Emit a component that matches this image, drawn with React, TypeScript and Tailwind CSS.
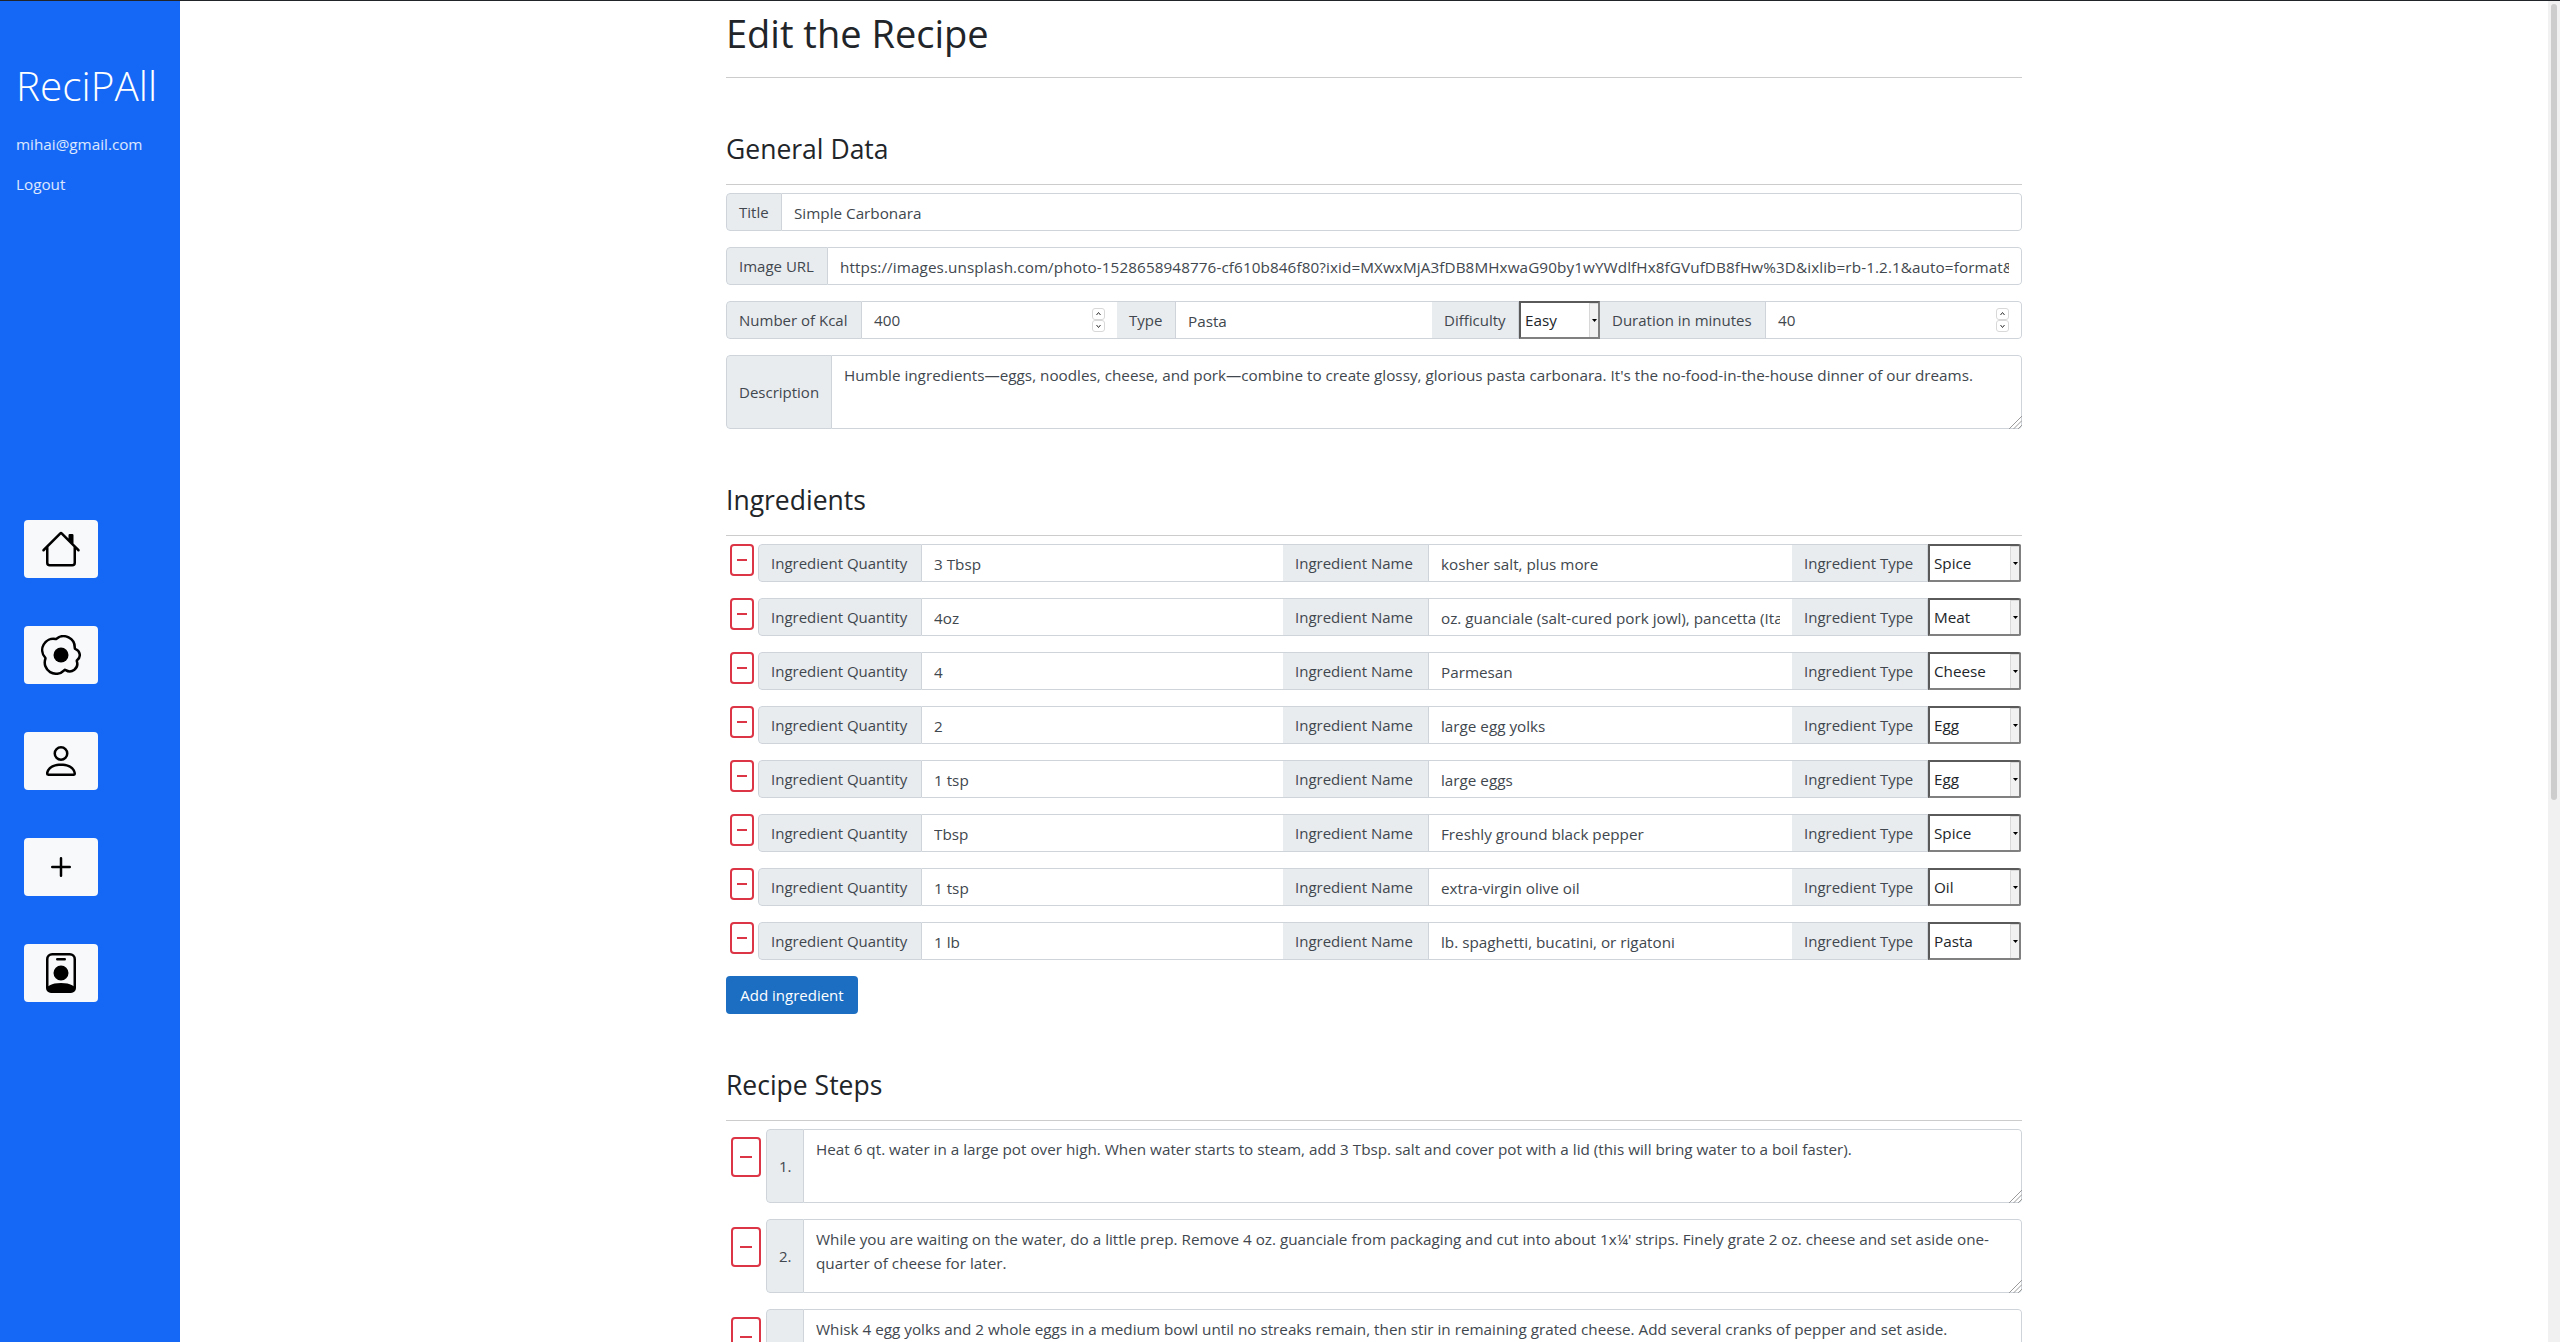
import { BsHouse, BsEggFried, BsPerson, BsPlus, BsPersonBadge } from 'react-icons/bs';

const ingredients = [
  { qty: '3 Tbsp', name: 'kosher salt, plus more', type: 'Spice' },
  { qty: '4oz', name: 'oz. guanciale (salt-cured pork jowl), pancetta (Italian bacon), or slab bacon', type: 'Meat' },
  { qty: '4', name: 'Parmesan', type: 'Cheese' },
  { qty: '2', name: 'large egg yolks', type: 'Egg' },
  { qty: '1 tsp', name: 'large eggs', type: 'Egg' },
  { qty: 'Tbsp', name: 'Freshly ground black pepper', type: 'Spice' },
  { qty: '1 tsp', name: 'extra-virgin olive oil', type: 'Oil' },
  { qty: '1 lb', name: 'lb. spaghetti, bucatini, or rigatoni', type: 'Pasta' },
];

const steps = [
  'Heat 6 qt. water in a large pot over high. When water starts to steam, add 3 Tbsp. salt and cover pot with a lid (this will bring water to a boil faster).',
  "While you are waiting on the water, do a little prep. Remove 4 oz. guanciale from packaging and cut into about 1x¼' strips. Finely grate 2 oz. cheese and set aside one-quarter of cheese for later.",
  'Whisk 4 egg yolks and 2 whole eggs in a medium bowl until no streaks remain, then stir in remaining grated cheese. Add several cranks of pepper and set aside.',
];

const navIcons = [BsHouse, BsEggFried, BsPerson, BsPlus, BsPersonBadge];

function Label({ text, className }: { text: string; className: string }) {
  return (
    <span className={`flex h-full shrink-0 items-center border-y border-r border-[#ced4da] bg-[#e9ecef] pt-px pl-3 text-[#41474e] ${className}`}>
      {text}
    </span>
  );
}

function Field({ value, className = '' }: { value: string; className?: string }) {
  return (
    <input
      readOnly
      value={value}
      className={`h-full min-w-0 flex-1 border-y border-[#ced4da] bg-white px-3 pt-px text-[15.25px] text-[#41474e] outline-none ${className}`}
    />
  );
}

function NumberField({ value, className }: { value: string; className: string }) {
  return (
    <div className={`flex h-full shrink-0 items-center border-y border-[#ced4da] bg-white pr-3 pl-3 ${className}`}>
      <span className="flex-1 pt-px text-[15.25px] text-[#41474e]">{value}</span>
      <svg width="13" height="24" viewBox="0 0 13 24" fill="none">
        <rect x="0.5" y="0.5" width="12" height="11" rx="2.5" stroke="#d8d8d8" />
        <rect x="0.5" y="12.5" width="12" height="11" rx="2.5" stroke="#d8d8d8" />
        <path d="M4.5 7l2-2.5 2 2.5" stroke="#333" />
        <path d="M4.5 17l2 2.5 2-2.5" stroke="#333" />
      </svg>
    </div>
  );
}

function Select({ value, className }: { value: string; className: string }) {
  return (
    <div className={`flex h-full shrink-0 items-stretch border-2 border-t-[#5a5a5a] border-r-[#808080] border-b-[#808080] border-l-[#5a5a5a] bg-white ${className}`}>
      <span className="flex flex-1 items-center pt-px pl-1 text-[15.25px] text-[#212529]">{value}</span>
      <span className="flex w-[9px] items-center justify-center border-t border-l border-[#d8d8d8] bg-[#f1f1f1]">
        <svg width="5" height="3" viewBox="0 0 5 3">
          <path d="M0 0h5L2.5 3z" fill="#000" />
        </svg>
      </span>
    </div>
  );
}

function DeleteButton({ className, dash }: { className: string; dash: string }) {
  return (
    <button className={`flex shrink-0 items-center justify-center rounded-[4px] border-2 border-[#dc3545] bg-white ${className}`}>
      <span className={`h-[2px] bg-[#dc3545] ${dash}`} />
    </button>
  );
}

function TextBox({ value }: { value: string }) {
  return (
    <div className="relative h-full min-w-0 flex-1">
      <textarea
        readOnly
        value={value}
        className="block h-full w-full resize-none rounded-r-[4px] border border-l-0 border-[#ced4da] px-3 pt-[7px] pb-[6px] text-[15.25px] leading-6 text-[#41474e] outline-none"
      />
      {/* resize handle */}
      <svg className="absolute right-0 bottom-0" width="14" height="14" viewBox="0 0 14 14" stroke="#9a9a9a" strokeWidth="1">
        <path d="M1 14L14 1M5.5 14L14 5.5M10 14L14 10" />
      </svg>
    </div>
  );
}

function SectionTitle({ text }: { text: string }) {
  return (
    <>
      <h3 className="mt-[54px] mb-[18px] h-[34px] text-[26.5px] leading-[34px] font-normal text-[#212529]">{text}</h3>
      <hr className="mb-2 border-[#cccccc]" />
    </>
  );
}

export default function App() {
  return (
    <div className="flex h-screen overflow-hidden border-t border-[#212529] bg-white font-['Open_Sans','Noto_Sans',sans-serif] text-[15px] text-[#212529]">
      <aside className="flex w-[180px] shrink-0 flex-col bg-[#1468f5] text-white">
        <h1 className="mt-[61px] ml-4 text-[40.5px] leading-[48px] font-light">ReciPAll</h1>
        <p className="mt-[22px] ml-4 text-[15.25px] leading-6 text-white/85">mihai@gmail.com</p>
        <p className="mt-4 ml-4 text-[15.25px] leading-6 text-white/85">Logout</p>
        <nav className="mt-[324px] flex flex-col gap-[48px] pl-6">
          {navIcons.map((Icon, i) => (
            <button key={i} className="flex h-[58px] w-[74px] items-center justify-center rounded-[4px] bg-[#f8f9fa] text-black">
              <Icon size={40} />
            </button>
          ))}
        </nav>
      </aside>

      <main className="min-w-0 flex-1 overflow-hidden pr-[526px] pl-[546px]">
        <h1 className="mt-[8px] h-[48px] text-[38px] leading-[48px] font-normal text-[#212529]">Edit the Recipe</h1>
        <hr className="mt-[20px] border-[#cccccc]" />

        <SectionTitle text="General Data" />
        <div className="flex flex-col gap-4">
          <div className="flex h-[38px] items-center overflow-hidden rounded-[4px]">
            <Label text="Title" className="w-[56px] rounded-l-[4px] border-l" />
            <Field value="Simple Carbonara" className="rounded-r-[4px] border-r" />
          </div>
          <div className="flex h-[38px] items-center overflow-hidden rounded-[4px]">
            <Label text="Image URL" className="w-[102px] rounded-l-[4px] border-l" />
            <Field
              value="https://images.unsplash.com/photo-1528658948776-cf610b846f80?ixid=MXwxMjA3fDB8MHxwaG90by1wYWdlfHx8fGVufDB8fHw%3D&ixlib=rb-1.2.1&auto=format&fit=crop&w=1350&q=80"
              className="rounded-r-[4px] border-r tracking-[0.1px]"
            />
          </div>
          <div className="flex h-[38px] items-center overflow-hidden rounded-[4px]">
            <Label text="Number of Kcal" className="w-[136px] rounded-l-[4px] border-l" />
            <NumberField value="400" className="w-[255px]" />
            <Label text="Type" className="w-[59px]" />
            <Field value="Pasta" />
            <Label text="Difficulty" className="w-[87px]" />
            <Select value="Easy" className="w-[81px]" />
            <Label text="Duration in minutes" className="w-[166px]" />
            <NumberField value="40" className="w-[256px] rounded-r-[4px] border-r" />
          </div>
          <div className="flex h-[74px] overflow-hidden rounded-[4px]">
            <Label text="Description" className="w-[106px] rounded-l-[4px] border-l" />
            <TextBox value="Humble ingredients—eggs, noodles, cheese, and pork—combine to create glossy, glorious pasta carbonara. It's the no-food-in-the-house dinner of our dreams." />
          </div>
        </div>

        <SectionTitle text="Ingredients" />
        <div className="flex flex-col gap-4">
          {ingredients.map((item, i) => (
            <div key={i} className="flex h-[38px] items-start">
              <DeleteButton className="ml-1 h-8 w-6" dash="w-[10px]" />
              <div className="ml-1 flex h-[38px] min-w-0 flex-1 items-center overflow-hidden rounded-[4px]">
                <Label text="Ingredient Quantity" className="w-[164px] rounded-l-[4px] border-l" />
                <Field value={item.qty} className="w-[361px] flex-none" />
                <Label text="Ingredient Name" className="w-[146px]" />
                <Field value={item.name} className="w-[363px] flex-none" />
                <Label text="Ingredient Type" className="w-[136px]" />
                <Select value={item.type} className="w-[93px]" />
              </div>
            </div>
          ))}
        </div>
        <button className="mt-4 h-[38px] w-[132px] rounded-[4px] bg-[#1b6ec2] pt-px text-white">Add ingredient</button>

        <SectionTitle text="Recipe Steps" />
        <div className="flex flex-col gap-4">
          {steps.map((step, i) => (
            <div key={i} className="flex h-[74px] items-start">
              <DeleteButton className="mt-2 ml-[5px] h-10 w-[30px]" dash="w-3" />
              <div className="ml-[5px] flex h-[74px] min-w-0 flex-1 overflow-hidden rounded-[4px]">
                <Label text={`${i + 1}.`} className="w-[38px] rounded-l-[4px] border-l" />
                <TextBox value={step} />
              </div>
            </div>
          ))}
        </div>
      </main>

      <div className="w-3 shrink-0 bg-[#f1f1f1] px-[3px] pt-[3px]">
        <div className="h-[796px] rounded-[3px] bg-[#cdcdcd]" />
      </div>
    </div>
  );
}
